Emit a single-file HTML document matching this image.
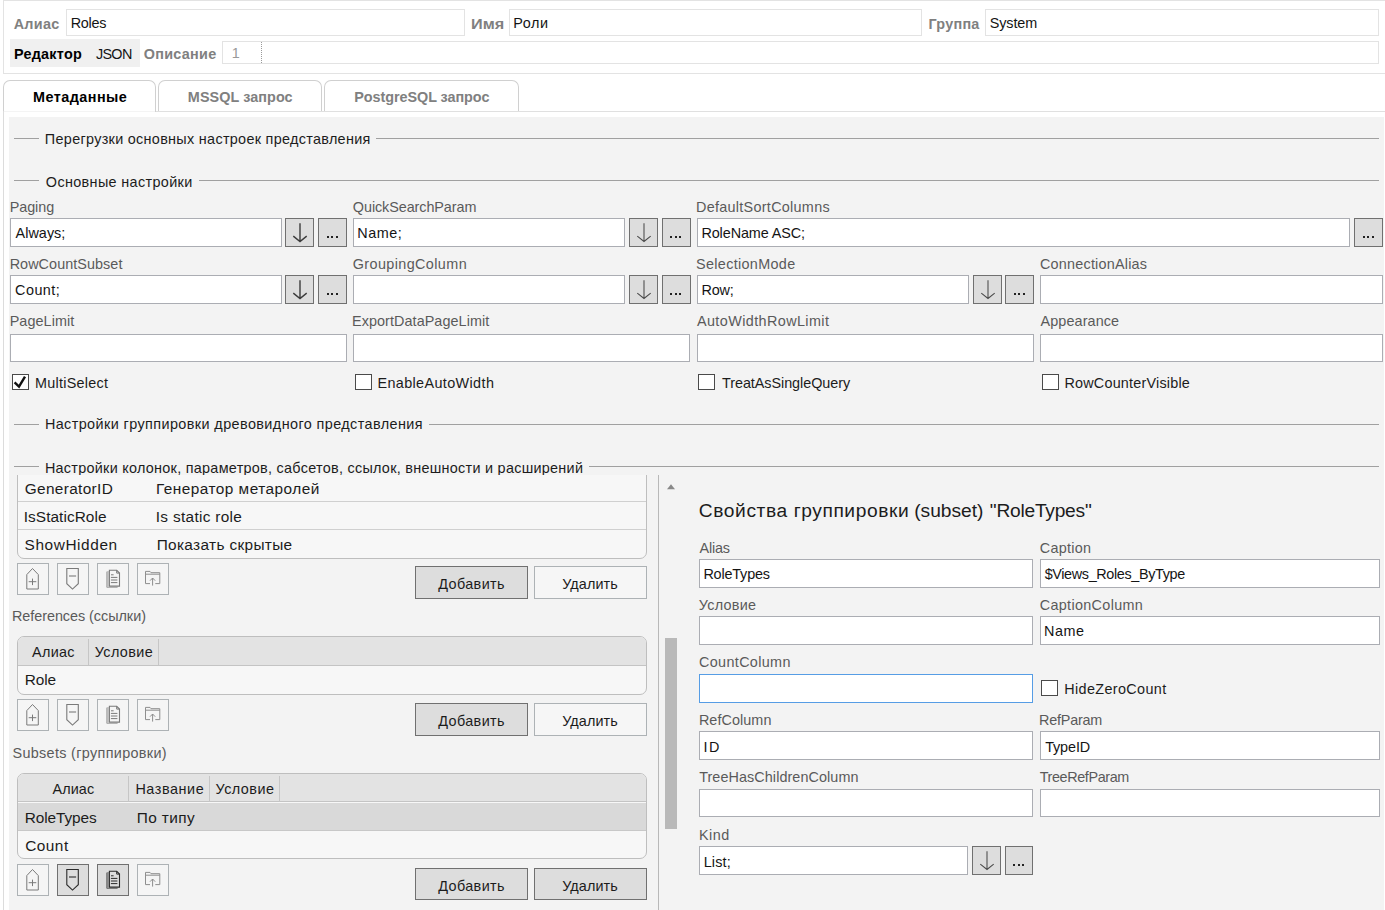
<!DOCTYPE html>
<html lang="ru"><head><meta charset="utf-8"><title>Roles</title>
<style>
html,body{margin:0;padding:0;background:#fff;}
body{width:1385px;height:910px;position:relative;overflow:hidden;font-family:"Liberation Sans",sans-serif;font-size:14.4px;color:#141414;}
body div,body span,body svg{position:absolute;box-sizing:border-box;}
.t{white-space:nowrap;line-height:20px;height:20px;}
</style></head><body>
<div style="left:3px;top:0px;width:1390px;height:74px;background:#fff;border:1px solid #e3e3e3;"></div>
<div style="left:66px;top:9px;width:399px;height:27px;background:#fff;border:1px solid #e3e3e3;"></div>
<div style="left:509px;top:9px;width:413px;height:27px;background:#fff;border:1px solid #e3e3e3;"></div>
<div style="left:985px;top:9px;width:394px;height:27px;background:#fff;border:1px solid #e3e3e3;"></div>
<div style="left:10px;top:39px;width:130px;height:28px;background:#f0f0f0;"></div>
<div style="left:222px;top:41px;width:1157px;height:23px;background:#fff;border:1px solid #e3e3e3;"></div>
<div style="left:261px;top:42px;width:0;height:21px;border-left:1px dotted #9a9a9a"></div>
<span id="t1" class="t" style="left:13.7px;top:14px;font-size:14.4px;font-weight:700;color:#808080;letter-spacing:0.277px;">Алиас</span>
<span id="t2" class="t" style="left:70.67px;top:13px;font-size:14.4px;letter-spacing:-0.232px;">Roles</span>
<span id="t3" class="t" style="left:470.8px;top:14px;font-size:14.4px;font-weight:700;color:#808080;transform-origin:0 0;transform:scaleX(1.1313);">Имя</span>
<span id="t4" class="t" style="left:513.3px;top:13px;font-size:14.4px;letter-spacing:0.555px;">Роли</span>
<span id="t5" class="t" style="left:928.43px;top:14px;font-size:14.4px;font-weight:700;color:#808080;letter-spacing:0.262px;">Группа</span>
<span id="t6" class="t" style="left:989.86px;top:13px;font-size:14.4px;letter-spacing:-0.143px;">System</span>
<span id="t7" class="t" style="left:13.96px;top:44px;font-size:14.4px;font-weight:700;color:#000;letter-spacing:0.258px;">Редактор</span>
<span id="t8" class="t" style="left:95.9px;top:44px;font-size:14.4px;letter-spacing:-0.656px;">JSON</span>
<span id="t9" class="t" style="left:143.7px;top:44px;font-size:14.4px;font-weight:700;color:#808080;letter-spacing:0.291px;">Описание</span>
<span id="t10" class="t" style="left:231.78px;top:43px;font-size:14.4px;color:#999;">1</span>
<div style="left:3px;top:111px;width:1382px;height:1px;background:#e0e0e0;"></div>
<div style="left:158px;top:80px;width:164px;height:31px;border:1px solid #d0d0d0;border-bottom:0;border-radius:7px 7px 0 0;background:#fff;"></div>
<div style="left:324px;top:80px;width:195px;height:31px;border:1px solid #d0d0d0;border-bottom:0;border-radius:7px 7px 0 0;background:#fff;"></div>
<div style="left:3px;top:80px;width:153px;height:32px;border:1px solid #d0d0d0;border-bottom:0;border-radius:7px 7px 0 0;background:#fff;"></div>
<div style="left:4px;top:111px;width:151px;height:1px;background:#f4f4f4;"></div>
<div style="left:3px;top:111px;width:1px;height:799px;background:#dcdcdc;"></div>
<span id="t11" class="t" style="left:32.96px;top:87px;font-size:14.4px;font-weight:700;color:#000;letter-spacing:0.469px;">Метаданные</span>
<span id="t12" class="t" style="left:187.85px;top:87px;font-size:14.4px;font-weight:700;color:#808080;letter-spacing:0.073px;">MSSQL запрос</span>
<span id="t13" class="t" style="left:354.23px;top:87px;font-size:14.4px;font-weight:700;color:#808080;letter-spacing:-0.049px;">PostgreSQL запрос</span>
<div style="left:9px;top:117px;width:1375px;height:800px;background:#f3f3f3;"></div>
<div style="left:14px;top:138px;width:24.5px;height:1px;background:#a0a0a0;"></div>
<div style="left:376px;top:138px;width:1003px;height:1px;background:#a0a0a0;"></div>
<span id="t14" class="t" style="left:44.86px;top:129px;font-size:14.4px;color:#1c1c1c;letter-spacing:0.306px;">Перегрузки основных настроек представления</span>
<div style="left:14px;top:180px;width:24.5px;height:1px;background:#a0a0a0;"></div>
<div style="left:198.5px;top:180px;width:1180.5px;height:1px;background:#a0a0a0;"></div>
<span id="t15" class="t" style="left:45.83px;top:172px;font-size:14.4px;color:#1c1c1c;letter-spacing:0.355px;">Основные настройки</span>
<div style="left:14px;top:424px;width:24.5px;height:1px;background:#a0a0a0;"></div>
<div style="left:428.5px;top:424px;width:950.5px;height:1px;background:#a0a0a0;"></div>
<span id="t16" class="t" style="left:44.89px;top:414px;font-size:14.4px;color:#1c1c1c;letter-spacing:0.411px;">Настройки группировки древовидного представления</span>
<div style="left:14px;top:466px;width:24.5px;height:1px;background:#a0a0a0;"></div>
<div style="left:588.7px;top:466px;width:790.3px;height:1px;background:#a0a0a0;"></div>
<span id="t17" class="t" style="left:44.89px;top:458px;font-size:14.4px;color:#1c1c1c;letter-spacing:0.281px;">Настройки колонок, параметров, сабсетов, ссылок, внешности и расширений</span>
<span id="t18" class="t" style="left:9.67px;top:197px;font-size:14.4px;color:#5a5a5a;letter-spacing:-0.063px;">Paging</span>
<div style="left:10px;top:218px;width:272px;height:29px;background:#fff;border:1px solid #abadb3;"></div>
<div style="left:285px;top:218px;width:29px;height:29px;background:#dddddd;border:1px solid #707070;"></div>
<svg style="left:285.00px;top:218.00px" width="29" height="29" viewBox="0 0 29 29"><path d="M15 5.2V23.2M8.3 18.1L15 23.5L21.7 18.1" fill="none" stroke="#3c3c3c" stroke-width="1.4"/></svg>
<div style="left:318px;top:218px;width:29px;height:29px;background:#dddddd;border:1px solid #707070;"></div>
<div style="left:326.6px;top:235.8px;width:2px;height:2px;background:#222;"></div>
<div style="left:331.2px;top:235.8px;width:2px;height:2px;background:#222;"></div>
<div style="left:335.8px;top:235.8px;width:2px;height:2px;background:#222;"></div>
<span id="t19" class="t" style="left:15.62px;top:223px;font-size:14.4px;letter-spacing:0.024px;">Always;</span>
<span id="t20" class="t" style="left:352.86px;top:197px;font-size:14.4px;color:#5a5a5a;letter-spacing:-0.084px;">QuickSearchParam</span>
<div style="left:353px;top:218px;width:272px;height:29px;background:#fff;border:1px solid #abadb3;"></div>
<div style="left:629px;top:218px;width:29px;height:29px;background:#dddddd;border:1px solid #707070;"></div>
<svg style="left:629.00px;top:218.00px" width="29" height="29" viewBox="0 0 29 29"><path d="M15 5.2V23.2M8.3 18.1L15 23.5L21.7 18.1" fill="none" stroke="#4a4a4a" stroke-width="1.05"/></svg>
<div style="left:661.5px;top:218px;width:29px;height:29px;background:#dddddd;border:1px solid #707070;"></div>
<div style="left:670.1px;top:235.8px;width:2px;height:2px;background:#222;"></div>
<div style="left:674.7px;top:235.8px;width:2px;height:2px;background:#222;"></div>
<div style="left:679.3px;top:235.8px;width:2px;height:2px;background:#222;"></div>
<span id="t21" class="t" style="left:357.3px;top:223px;font-size:14.4px;letter-spacing:0.491px;">Name;</span>
<span id="t22" class="t" style="left:696.05px;top:197px;font-size:14.4px;color:#5a5a5a;letter-spacing:0.282px;">DefaultSortColumns</span>
<div style="left:697px;top:218px;width:652.5px;height:29px;background:#fff;border:1px solid #abadb3;"></div>
<div style="left:1354px;top:218px;width:29px;height:29px;background:#dddddd;border:1px solid #707070;"></div>
<div style="left:1362.6px;top:235.8px;width:2px;height:2px;background:#222;"></div>
<div style="left:1367.2px;top:235.8px;width:2px;height:2px;background:#222;"></div>
<div style="left:1371.8px;top:235.8px;width:2px;height:2px;background:#222;"></div>
<span id="t23" class="t" style="left:701.41px;top:223px;font-size:14.4px;letter-spacing:-0.092px;">RoleName ASC;</span>
<span id="t24" class="t" style="left:9.67px;top:254px;font-size:14.4px;color:#5a5a5a;letter-spacing:0.058px;">RowCountSubset</span>
<div style="left:10px;top:275.4px;width:272px;height:29px;background:#fff;border:1px solid #abadb3;"></div>
<div style="left:285px;top:275.4px;width:29px;height:29px;background:#dddddd;border:1px solid #707070;"></div>
<svg style="left:285.00px;top:275.40px" width="29" height="29" viewBox="0 0 29 29"><path d="M15 5.2V23.2M8.3 18.1L15 23.5L21.7 18.1" fill="none" stroke="#3c3c3c" stroke-width="1.4"/></svg>
<div style="left:318px;top:275.4px;width:29px;height:29px;background:#dddddd;border:1px solid #707070;"></div>
<div style="left:326.6px;top:293.2px;width:2px;height:2px;background:#222;"></div>
<div style="left:331.2px;top:293.2px;width:2px;height:2px;background:#222;"></div>
<div style="left:335.8px;top:293.2px;width:2px;height:2px;background:#222;"></div>
<span id="t25" class="t" style="left:15.07px;top:280px;font-size:14.4px;letter-spacing:0.471px;">Count;</span>
<span id="t26" class="t" style="left:352.73px;top:254px;font-size:14.4px;color:#5a5a5a;letter-spacing:0.396px;">GroupingColumn</span>
<div style="left:353px;top:275.4px;width:272px;height:29px;background:#fff;border:1px solid #abadb3;"></div>
<div style="left:629px;top:275.4px;width:29px;height:29px;background:#dddddd;border:1px solid #707070;"></div>
<svg style="left:629.00px;top:275.40px" width="29" height="29" viewBox="0 0 29 29"><path d="M15 5.2V23.2M8.3 18.1L15 23.5L21.7 18.1" fill="none" stroke="#4a4a4a" stroke-width="1.05"/></svg>
<div style="left:661.5px;top:275.4px;width:29px;height:29px;background:#dddddd;border:1px solid #707070;"></div>
<div style="left:670.1px;top:293.2px;width:2px;height:2px;background:#222;"></div>
<div style="left:674.7px;top:293.2px;width:2px;height:2px;background:#222;"></div>
<div style="left:679.3px;top:293.2px;width:2px;height:2px;background:#222;"></div>
<span id="t27" class="t" style="left:696.06px;top:254px;font-size:14.4px;color:#5a5a5a;letter-spacing:0.328px;">SelectionMode</span>
<div style="left:697px;top:275.4px;width:271.7px;height:29px;background:#fff;border:1px solid #abadb3;"></div>
<div style="left:973px;top:275.4px;width:29px;height:29px;background:#dddddd;border:1px solid #707070;"></div>
<svg style="left:973.00px;top:275.40px" width="29" height="29" viewBox="0 0 29 29"><path d="M15 5.2V23.2M8.3 18.1L15 23.5L21.7 18.1" fill="none" stroke="#4a4a4a" stroke-width="1.05"/></svg>
<div style="left:1005px;top:275.4px;width:29px;height:29px;background:#dddddd;border:1px solid #707070;"></div>
<div style="left:1013.6px;top:293.2px;width:2px;height:2px;background:#222;"></div>
<div style="left:1018.2px;top:293.2px;width:2px;height:2px;background:#222;"></div>
<div style="left:1022.8px;top:293.2px;width:2px;height:2px;background:#222;"></div>
<span id="t28" class="t" style="left:701.41px;top:280px;font-size:14.4px;letter-spacing:-0.145px;">Row;</span>
<span id="t29" class="t" style="left:1040.03px;top:254px;font-size:14.4px;color:#5a5a5a;letter-spacing:0.21px;">ConnectionAlias</span>
<div style="left:1040px;top:275.4px;width:343px;height:29px;background:#fff;border:1px solid #abadb3;"></div>
<span id="t30" class="t" style="left:9.67px;top:311px;font-size:14.4px;color:#5a5a5a;letter-spacing:0.075px;">PageLimit</span>
<div style="left:10px;top:333.5px;width:337px;height:28px;background:#fff;border:1px solid #abadb3;"></div>
<span id="t31" class="t" style="left:352.05px;top:311px;font-size:14.4px;color:#5a5a5a;letter-spacing:0.067px;">ExportDataPageLimit</span>
<div style="left:353px;top:333.5px;width:337px;height:28px;background:#fff;border:1px solid #abadb3;"></div>
<span id="t32" class="t" style="left:696.96px;top:311px;font-size:14.4px;color:#5a5a5a;letter-spacing:0.399px;">AutoWidthRowLimit</span>
<div style="left:697px;top:333.5px;width:336.5px;height:28px;background:#fff;border:1px solid #abadb3;"></div>
<span id="t33" class="t" style="left:1040.5px;top:311px;font-size:14.4px;color:#5a5a5a;letter-spacing:0.113px;">Appearance</span>
<div style="left:1040px;top:333.5px;width:343px;height:28px;background:#fff;border:1px solid #abadb3;"></div>
<div style="left:12px;top:374px;width:16.6px;height:16px;background:#fff;border:1px solid #4a4a4a;"></div>
<svg style="left:12px;top:374px" width="17" height="16" viewBox="0 0 17 16"><path d="M2.6 8.3L7 12.6L13 2.6" fill="none" stroke="#111" stroke-width="2.4"/></svg>
<span id="t34" class="t" style="left:34.92px;top:373px;font-size:14.4px;color:#1c1c1c;letter-spacing:0.268px;">MultiSelect</span>
<div style="left:355px;top:374px;width:16.6px;height:16px;background:#fff;border:1px solid #4a4a4a;"></div>
<span id="t35" class="t" style="left:377.41px;top:373px;font-size:14.4px;color:#1c1c1c;letter-spacing:0.377px;">EnableAutoWidth</span>
<div style="left:698px;top:374px;width:16.6px;height:16px;background:#fff;border:1px solid #4a4a4a;"></div>
<span id="t36" class="t" style="left:722.03px;top:373px;font-size:14.4px;color:#1c1c1c;letter-spacing:-0.056px;">TreatAsSingleQuery</span>
<div style="left:1042px;top:374px;width:16.6px;height:16px;background:#fff;border:1px solid #4a4a4a;"></div>
<span id="t37" class="t" style="left:1064.41px;top:373px;font-size:14.4px;color:#1c1c1c;letter-spacing:0.208px;">RowCounterVisible</span>
<div style="left:9px;top:475px;width:650px;height:440px;background:#f3f3f3;"></div>
<div style="left:9px;top:475px;width:645px;height:90px;overflow:hidden"><div style="left:8px;top:-30px;width:630px;height:114px;background:#f7f7f7;border:1px solid #bebebe;border-radius:7px"></div></div>
<div style="left:18px;top:501px;width:628px;height:1px;background:#d0d0d0;"></div>
<div style="left:18px;top:529px;width:628px;height:1px;background:#d0d0d0;"></div>
<span id="t38" class="t" style="left:24.77px;top:478.5px;font-size:15.4px;color:#1c1c1c;letter-spacing:0.331px;">GeneratorID</span>
<span id="t39" class="t" style="left:156px;top:478.5px;font-size:15.4px;color:#1c1c1c;letter-spacing:0.462px;">Генератор метаролей</span>
<span id="t40" class="t" style="left:23.79px;top:506.5px;font-size:15.4px;color:#1c1c1c;letter-spacing:0.054px;">IsStaticRole</span>
<span id="t41" class="t" style="left:155.79px;top:506.5px;font-size:15.4px;color:#1c1c1c;letter-spacing:0.306px;">Is static role</span>
<span id="t42" class="t" style="left:24.54px;top:534.5px;font-size:15.4px;color:#1c1c1c;letter-spacing:0.587px;">ShowHidden</span>
<span id="t43" class="t" style="left:156.67px;top:534.5px;font-size:15.4px;color:#1c1c1c;letter-spacing:0.336px;">Показать скрытые</span>
<div style="left:17px;top:563.2px;width:31.5px;height:31.5px;background:#f5f5f5;border:1px solid #adb2b5;"></div>
<svg style="left:17.00px;top:563.20px" width="32" height="32" viewBox="0 0 32 32"><path d="M9.8 26V11.6L15.5 5.5L21.3 11.6V26Z" fill="none" stroke="#7a7a7a" stroke-width="1"/><path d="M15.5 15.6V22.1M11.7 18.7H19.3" fill="none" stroke="#7a7a7a" stroke-width="1"/></svg>
<div style="left:57px;top:563.2px;width:31.5px;height:31.5px;background:#f5f5f5;border:1px solid #adb2b5;"></div>
<svg style="left:57.00px;top:563.20px" width="32" height="32" viewBox="0 0 32 32"><path d="M9.8 5.5H21.3V20.7L15.5 26.1L9.8 20.7Z" fill="none" stroke="#7a7a7a" stroke-width="1.1"/><path d="M12 13H19.1" fill="none" stroke="#7a7a7a" stroke-width="1.1"/></svg>
<div style="left:97px;top:563.2px;width:31.5px;height:31.5px;background:#f5f5f5;border:1px solid #adb2b5;"></div>
<svg style="left:97.00px;top:563.20px" width="32" height="32" viewBox="0 0 32 32"><path d="M9.8 8.6V24.3H20.6M11 8V23.6" fill="none" stroke="#7a7a7a" stroke-opacity="0.75" stroke-width="0.9"/><path d="M12.4 7.3H19.7L22.5 10.1V23.1H12.4Z" fill="none" stroke="#7a7a7a" stroke-width="1.1"/><path d="M19.7 7.3V10.1H22.5M14 11.8H16.6M13.9 14.4H20.4M13.9 17H20.4M13.9 19.6H20.4" fill="none" stroke="#7a7a7a" stroke-width="1"/></svg>
<div style="left:137px;top:563.2px;width:31.5px;height:31.5px;background:#f5f5f5;border:1px solid #adb2b5;"></div>
<svg style="left:137.00px;top:563.20px" width="32" height="32" viewBox="0 0 32 32"><path d="M13 20.6H8.5V8.4H13L14 9.7H22.8V20.6H18.3" fill="none" stroke="#8e8e8e" stroke-width="1"/><path d="M8.5 11.2H22.8" fill="none" stroke="#8e8e8e" stroke-width="1"/><path d="M15.6 22.6V15M13 17.7L15.6 15L18.2 17.7" fill="none" stroke="#8e8e8e" stroke-width="1"/></svg>
<div style="left:415px;top:566.2px;width:113px;height:32.6px;background:#dddddd;border:1px solid #707070;"></div>
<span id="t44" class="t" style="left:438.35px;top:574px;font-size:14.4px;color:#1c1c1c;letter-spacing:0.363px;">Добавить</span>
<div style="left:534px;top:566.2px;width:113px;height:32.6px;background:#f6f6f6;border:1px solid #adb2b5;"></div>
<span id="t45" class="t" style="left:562.19px;top:574px;font-size:14.4px;color:#1c1c1c;letter-spacing:0.115px;">Удалить</span>
<span id="t46" class="t" style="left:11.89px;top:606px;font-size:14.4px;color:#5a5a5a;letter-spacing:-0.032px;">References (ссылки)</span>
<div style="left:17px;top:636.2px;width:630px;height:59px;background:#f7f7f7;border:1px solid #bebebe;border-radius:7px;overflow:hidden"><div style="left:0;top:0;width:630px;height:28.5px;background:#e3e3e3;border-bottom:1px solid #c4c4c4"></div></div>
<div style="left:88.2px;top:638.5px;width:1px;height:26px;background:#c6c6c6;"></div>
<div style="left:158px;top:638.5px;width:1px;height:26px;background:#c6c6c6;"></div>
<span id="t47" class="t" style="left:32.08px;top:642px;font-size:14.4px;color:#1c1c1c;letter-spacing:0.301px;">Алиас</span>
<span id="t48" class="t" style="left:94.68px;top:642px;font-size:14.4px;color:#1c1c1c;letter-spacing:0.415px;">Условие</span>
<span id="t49" class="t" style="left:24.76px;top:669.5px;font-size:15.4px;color:#1c1c1c;letter-spacing:-0.136px;">Role</span>
<div style="left:17px;top:699.4px;width:31.5px;height:32px;background:#f5f5f5;border:1px solid #adb2b5;"></div>
<svg style="left:17.00px;top:699.40px" width="32" height="32" viewBox="0 0 32 32"><path d="M9.8 26V11.6L15.5 5.5L21.3 11.6V26Z" fill="none" stroke="#7a7a7a" stroke-width="1"/><path d="M15.5 15.6V22.1M11.7 18.7H19.3" fill="none" stroke="#7a7a7a" stroke-width="1"/></svg>
<div style="left:57px;top:699.4px;width:31.5px;height:32px;background:#f5f5f5;border:1px solid #adb2b5;"></div>
<svg style="left:57.00px;top:699.40px" width="32" height="32" viewBox="0 0 32 32"><path d="M9.8 5.5H21.3V20.7L15.5 26.1L9.8 20.7Z" fill="none" stroke="#7a7a7a" stroke-width="1.1"/><path d="M12 13H19.1" fill="none" stroke="#7a7a7a" stroke-width="1.1"/></svg>
<div style="left:97px;top:699.4px;width:31.5px;height:32px;background:#f5f5f5;border:1px solid #adb2b5;"></div>
<svg style="left:97.00px;top:699.40px" width="32" height="32" viewBox="0 0 32 32"><path d="M9.8 8.6V24.3H20.6M11 8V23.6" fill="none" stroke="#7a7a7a" stroke-opacity="0.75" stroke-width="0.9"/><path d="M12.4 7.3H19.7L22.5 10.1V23.1H12.4Z" fill="none" stroke="#7a7a7a" stroke-width="1.1"/><path d="M19.7 7.3V10.1H22.5M14 11.8H16.6M13.9 14.4H20.4M13.9 17H20.4M13.9 19.6H20.4" fill="none" stroke="#7a7a7a" stroke-width="1"/></svg>
<div style="left:137px;top:699.4px;width:31.5px;height:32px;background:#f5f5f5;border:1px solid #adb2b5;"></div>
<svg style="left:137.00px;top:699.40px" width="32" height="32" viewBox="0 0 32 32"><path d="M13 20.6H8.5V8.4H13L14 9.7H22.8V20.6H18.3" fill="none" stroke="#8e8e8e" stroke-width="1"/><path d="M8.5 11.2H22.8" fill="none" stroke="#8e8e8e" stroke-width="1"/><path d="M15.6 22.6V15M13 17.7L15.6 15L18.2 17.7" fill="none" stroke="#8e8e8e" stroke-width="1"/></svg>
<div style="left:415px;top:703.2px;width:113px;height:32.5px;background:#dddddd;border:1px solid #707070;"></div>
<span id="t50" class="t" style="left:438.35px;top:711px;font-size:14.4px;color:#1c1c1c;letter-spacing:0.363px;">Добавить</span>
<div style="left:534px;top:703.2px;width:113px;height:32.5px;background:#f6f6f6;border:1px solid #adb2b5;"></div>
<span id="t51" class="t" style="left:562.19px;top:711px;font-size:14.4px;color:#1c1c1c;letter-spacing:0.115px;">Удалить</span>
<span id="t52" class="t" style="left:12.46px;top:743px;font-size:14.4px;color:#5a5a5a;letter-spacing:0.332px;">Subsets (группировки)</span>
<div style="left:17px;top:773.3px;width:630px;height:86.1px;background:#f7f7f7;border:1px solid #bebebe;border-radius:7px;overflow:hidden"><div style="left:0;top:0;width:630px;height:28px;background:#e3e3e3;border-bottom:1px solid #c4c4c4"></div><div style="left:0;top:29px;width:630px;height:28px;background:#d9d9d9;border-bottom:1px solid #c8c8c8"></div></div>
<div style="left:128.4px;top:775.5px;width:1px;height:26px;background:#c6c6c6;"></div>
<div style="left:209px;top:775.5px;width:1px;height:26px;background:#c6c6c6;"></div>
<div style="left:279px;top:775.5px;width:1px;height:26px;background:#c6c6c6;"></div>
<span id="t53" class="t" style="left:52.5px;top:779px;font-size:14.4px;color:#1c1c1c;letter-spacing:0.113px;">Алиас</span>
<span id="t54" class="t" style="left:135.41px;top:779px;font-size:14.4px;color:#1c1c1c;letter-spacing:0.566px;">Название</span>
<span id="t55" class="t" style="left:215.53px;top:779px;font-size:14.4px;color:#1c1c1c;letter-spacing:0.472px;">Условие</span>
<span id="t56" class="t" style="left:24.76px;top:807.5px;font-size:15.4px;color:#1c1c1c;letter-spacing:-0.108px;">RoleTypes</span>
<span id="t57" class="t" style="left:136.77px;top:807.5px;font-size:15.4px;color:#1c1c1c;letter-spacing:0.399px;">По типу</span>
<span id="t58" class="t" style="left:25.17px;top:835.5px;font-size:15.4px;color:#1c1c1c;letter-spacing:0.486px;">Count</span>
<div style="left:17px;top:864px;width:31.5px;height:31.5px;background:#f5f5f5;border:1px solid #adb2b5;"></div>
<svg style="left:17.00px;top:864.00px" width="32" height="32" viewBox="0 0 32 32"><path d="M9.8 26V11.6L15.5 5.5L21.3 11.6V26Z" fill="none" stroke="#7a7a7a" stroke-width="1"/><path d="M15.5 15.6V22.1M11.7 18.7H19.3" fill="none" stroke="#7a7a7a" stroke-width="1"/></svg>
<div style="left:57px;top:864px;width:31.5px;height:31.5px;background:#dddddd;border:1px solid #707070;"></div>
<svg style="left:57.00px;top:864.00px" width="32" height="32" viewBox="0 0 32 32"><path d="M9.8 5.5H21.3V20.7L15.5 26.1L9.8 20.7Z" fill="none" stroke="#2a2a2a" stroke-width="1.1"/><path d="M12 13H19.1" fill="none" stroke="#2a2a2a" stroke-width="1.1"/></svg>
<div style="left:97px;top:864px;width:31.5px;height:31.5px;background:#dddddd;border:1px solid #707070;"></div>
<svg style="left:97.00px;top:864.00px" width="32" height="32" viewBox="0 0 32 32"><path d="M9.8 8.6V24.3H20.6M11 8V23.6" fill="none" stroke="#2a2a2a" stroke-opacity="0.75" stroke-width="0.9"/><path d="M12.4 7.3H19.7L22.5 10.1V23.1H12.4Z" fill="none" stroke="#2a2a2a" stroke-width="1.1"/><path d="M19.7 7.3V10.1H22.5M14 11.8H16.6M13.9 14.4H20.4M13.9 17H20.4M13.9 19.6H20.4" fill="none" stroke="#2a2a2a" stroke-width="1"/></svg>
<div style="left:137px;top:864px;width:31.5px;height:31.5px;background:#f5f5f5;border:1px solid #adb2b5;"></div>
<svg style="left:137.00px;top:864.00px" width="32" height="32" viewBox="0 0 32 32"><path d="M13 20.6H8.5V8.4H13L14 9.7H22.8V20.6H18.3" fill="none" stroke="#8e8e8e" stroke-width="1"/><path d="M8.5 11.2H22.8" fill="none" stroke="#8e8e8e" stroke-width="1"/><path d="M15.6 22.6V15M13 17.7L15.6 15L18.2 17.7" fill="none" stroke="#8e8e8e" stroke-width="1"/></svg>
<div style="left:415px;top:868.4px;width:113px;height:31.3px;background:#dddddd;border:1px solid #707070;"></div>
<span id="t59" class="t" style="left:438.35px;top:876px;font-size:14.4px;color:#1c1c1c;letter-spacing:0.363px;">Добавить</span>
<div style="left:534px;top:868.4px;width:113px;height:31.3px;background:#dddddd;border:1px solid #707070;"></div>
<span id="t60" class="t" style="left:562.19px;top:876px;font-size:14.4px;color:#1c1c1c;letter-spacing:0.115px;">Удалить</span>
<div style="left:658px;top:475px;width:1px;height:435px;background:#b8b8b8;"></div>
<div style="left:665px;top:638px;width:12px;height:190.5px;background:#b9b9b9;"></div>
<svg style="left:666px;top:482px" width="10" height="9" viewBox="0 0 10 9"><path d="M1 7.3L5 2.2L9 7.3Z" fill="#888"/></svg>
<span id="t61" class="t" style="left:698.86px;top:500.5px;font-size:19.2px;color:#1c1c1c;letter-spacing:0.577px;">Свойства группировки</span>
<span id="t62" class="t" style="left:914.21px;top:500.5px;font-size:19.2px;color:#1c1c1c;letter-spacing:-0.009px;">(subset)</span>
<span id="t63" class="t" style="left:989.85px;top:500.5px;font-size:19.2px;color:#1c1c1c;letter-spacing:-0.241px;">&quot;RoleTypes&quot;</span>
<span id="t64" class="t" style="left:699.5px;top:538px;font-size:14.4px;color:#5a5a5a;letter-spacing:-0.185px;">Alias</span>
<div style="left:699px;top:559px;width:334px;height:29px;background:#fff;border:1px solid #abadb3;"></div>
<span id="t65" class="t" style="left:703.41px;top:564px;font-size:14.4px;letter-spacing:-0.178px;">RoleTypes</span>
<span id="t66" class="t" style="left:1039.74px;top:538px;font-size:14.4px;color:#5a5a5a;letter-spacing:0.266px;">Caption</span>
<div style="left:1040px;top:559px;width:340px;height:29px;background:#fff;border:1px solid #abadb3;"></div>
<span id="t67" class="t" style="left:1044.65px;top:564px;font-size:14.4px;letter-spacing:-0.352px;">$Views_Roles_ByType</span>
<span id="t68" class="t" style="left:698.83px;top:595px;font-size:14.4px;color:#5a5a5a;letter-spacing:0.248px;">Условие</span>
<div style="left:699px;top:616.3px;width:334px;height:28.5px;background:#fff;border:1px solid #abadb3;"></div>
<span id="t69" class="t" style="left:1039.74px;top:595px;font-size:14.4px;color:#5a5a5a;letter-spacing:0.327px;">CaptionColumn</span>
<div style="left:1040px;top:616.3px;width:340px;height:28.5px;background:#fff;border:1px solid #abadb3;"></div>
<span id="t70" class="t" style="left:1043.91px;top:621px;font-size:14.4px;letter-spacing:0.607px;">Name</span>
<span id="t71" class="t" style="left:699.03px;top:652px;font-size:14.4px;color:#5a5a5a;letter-spacing:0.343px;">CountColumn</span>
<div style="left:699px;top:674.3px;width:334px;height:28.5px;background:#fff;border:1px solid #569de5;"></div>
<div style="left:1041px;top:680px;width:16.6px;height:16px;background:#fff;border:1px solid #4a4a4a;"></div>
<span id="t72" class="t" style="left:1064.3px;top:679px;font-size:14.4px;color:#1c1c1c;letter-spacing:0.361px;">HideZeroCount</span>
<span id="t73" class="t" style="left:698.92px;top:710px;font-size:14.4px;color:#5a5a5a;letter-spacing:0.066px;">RefColumn</span>
<div style="left:699px;top:731.3px;width:334px;height:28.5px;background:#fff;border:1px solid #abadb3;"></div>
<span id="t74" class="t" style="left:703.53px;top:737px;font-size:14.4px;letter-spacing:1.438px;">ID</span>
<span id="t75" class="t" style="left:1039.05px;top:710px;font-size:14.4px;color:#5a5a5a;letter-spacing:-0.211px;">RefParam</span>
<div style="left:1040px;top:731.3px;width:340px;height:28.5px;background:#fff;border:1px solid #abadb3;"></div>
<span id="t76" class="t" style="left:1045.13px;top:737px;font-size:14.4px;letter-spacing:-0.098px;">TypeID</span>
<span id="t77" class="t" style="left:699.15px;top:767px;font-size:14.4px;color:#5a5a5a;letter-spacing:0.075px;">TreeHasChildrenColumn</span>
<div style="left:699px;top:789.2px;width:334px;height:27.5px;background:#fff;border:1px solid #abadb3;"></div>
<span id="t78" class="t" style="left:1039.73px;top:767px;font-size:14.4px;color:#5a5a5a;letter-spacing:-0.389px;">TreeRefParam</span>
<div style="left:1040px;top:789.2px;width:340px;height:27.5px;background:#fff;border:1px solid #abadb3;"></div>
<span id="t79" class="t" style="left:698.92px;top:825px;font-size:14.4px;color:#5a5a5a;letter-spacing:0.483px;">Kind</span>
<div style="left:699px;top:846.4px;width:269px;height:28.5px;background:#fff;border:1px solid #abadb3;"></div>
<span id="t80" class="t" style="left:703.67px;top:852px;font-size:14.4px;letter-spacing:0.149px;">List;</span>
<div style="left:972px;top:846.4px;width:29px;height:28.5px;background:#dddddd;border:1px solid #707070;"></div>
<svg style="left:972.00px;top:846.15px" width="29" height="29" viewBox="0 0 29 29"><path d="M15 5.2V23.2M8.3 18.1L15 23.5L21.7 18.1" fill="none" stroke="#4a4a4a" stroke-width="1.05"/></svg>
<div style="left:1005px;top:846.4px;width:28px;height:28.5px;background:#dddddd;border:1px solid #707070;"></div>
<div style="left:1013.1px;top:863.7px;width:2px;height:2px;background:#222;"></div>
<div style="left:1017.7px;top:863.7px;width:2px;height:2px;background:#222;"></div>
<div style="left:1022.3px;top:863.7px;width:2px;height:2px;background:#222;"></div>
</body></html>
